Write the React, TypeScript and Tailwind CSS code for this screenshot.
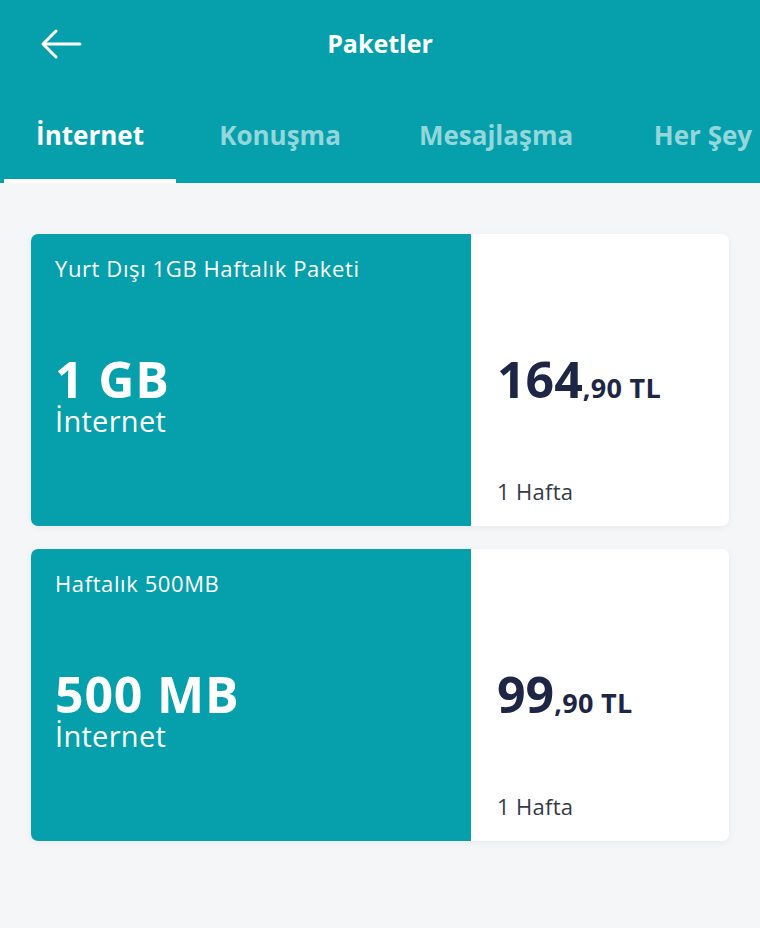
import React from 'react'

const tabs = [
    { label: 'İnternet', w: 'w-[172px]', active: true },
    { label: 'Konuşma', w: 'w-[208px]', active: false },
    { label: 'Mesajlaşma', w: 'w-[224px]', active: false },
    { label: 'Her Şey', w: 'w-[190px]', active: false },
]

const packages = [
    { title: 'Yurt Dışı 1GB Haftalık Paketi', amount: '1 GB', price: '164', cents: ',90 TL', period: '1 Hafta' },
    { title: 'Haftalık 500MB', amount: '500 MB', price: '99', cents: ',90 TL', period: '1 Hafta' },
]

const PackageCard = ({ p }: { p: typeof packages[number] }) => {
    return (
        <div className='flex h-[292px] rounded-[7px] overflow-hidden bg-white shadow-[0_2px_8px_rgba(0,0,0,0.05)]'>
            <div className='w-[440px] bg-[#05a0ab] text-white flex flex-col px-6 pt-[20px]'>
                <p className='text-[22px] leading-7 tracking-[0.6px]'>{p.title}</p>
                <p className='mt-[72px]'>
                    <span className='block text-[50px] font-bold leading-[50px] tracking-[0.8px]'>{p.amount}</span>
                    <span className='block text-[29px] leading-[34px] tracking-[0.3px]'>İnternet</span>
                </p>
            </div>
            <div className='flex-1 flex flex-col px-[26px] text-[#1d2645]'>
                <p className='mt-[117px] font-bold leading-[56px]'>
                    <span className='text-[50px]'>{p.price}</span>
                    <span className='text-[27px] tracking-[0.3px]'>{p.cents}</span>
                </p>
                <p className='mt-auto mb-[18px] text-[22px] text-[#353b48] tracking-[0.3px]'>{p.period}</p>
            </div>
        </div>
    )
}

const App = () => {
    return (
        <div className='w-[760px] h-[928px] bg-[#f5f6f8] overflow-hidden' style={{ fontFamily: '"Open Sans", "Noto Sans", sans-serif' }}>
            <div className='bg-[#05a0ab] h-[183px] flex flex-col'>
                <div className='relative h-[88px] flex items-center justify-center'>
                    <svg className='absolute left-[40px] top-[28px]' width='44' height='32' viewBox='0 0 44 32' fill='none' stroke='white' strokeWidth='3' strokeLinecap='round' strokeLinejoin='round'>
                        <path d='M40 16H4M16 3L3 16l13 13' />
                    </svg>
                    <h1 className='text-white text-[25px] font-bold'>Paketler</h1>
                </div>
                <div className='flex flex-1 pl-1 whitespace-nowrap'>
                    {tabs.map((t) => (
                        <div key={t.label} className={`${t.w} shrink-0 flex flex-col`}>
                            <div className={`flex-1 flex items-center justify-center pt-[4px] text-[26px] font-bold ${t.active ? 'text-white' : 'text-[#93d7dc]'}`}>
                                {t.label}
                            </div>
                            <div className={`h-[4px] ${t.active ? 'bg-white' : ''}`} />
                        </div>
                    ))}
                </div>
            </div>
            <div className='flex flex-col gap-[23px] px-[31px] pt-[51px]'>
                {packages.map((p) => (
                    <PackageCard key={p.title} p={p} />
                ))}
            </div>
        </div>
    )
}

export default App
